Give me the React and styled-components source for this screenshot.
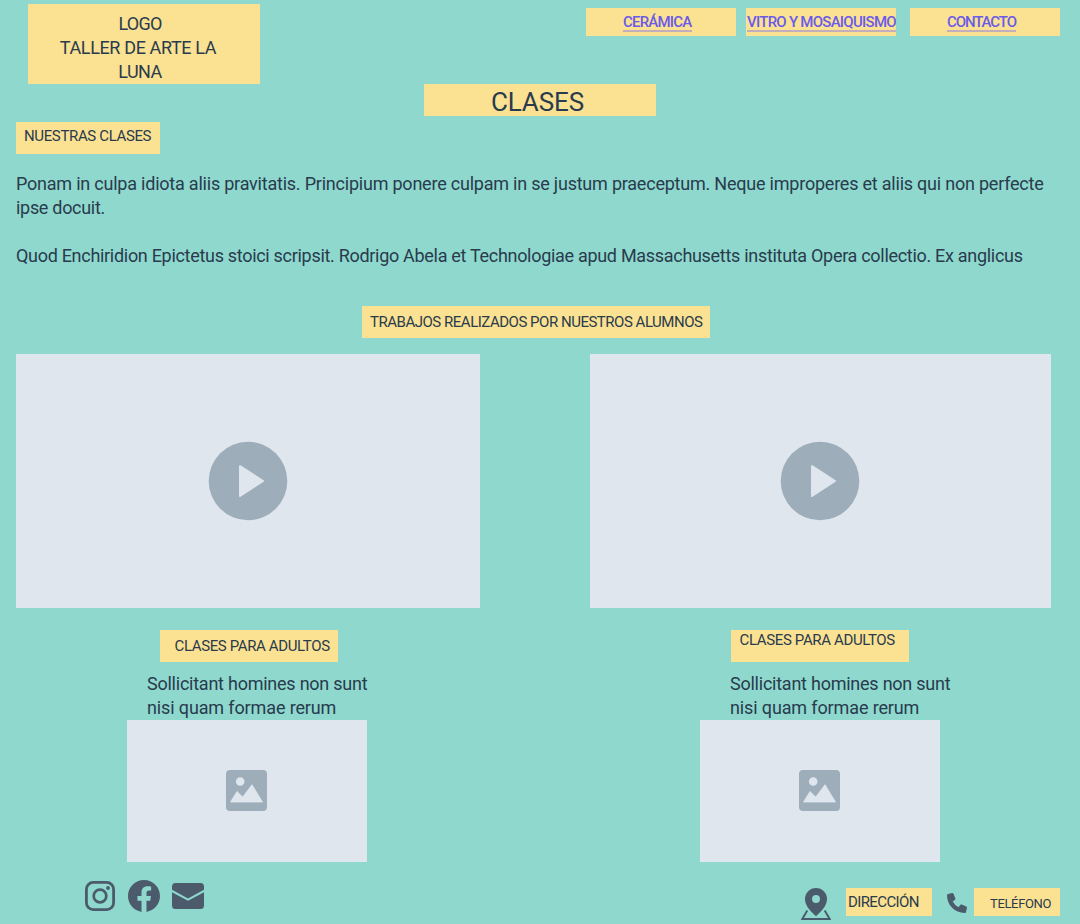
import React from 'react';
import styled, { createGlobalStyle } from 'styled-components';

const GlobalStyle = createGlobalStyle`
  * { box-sizing: border-box; }
  body {
    margin: 0;
    background: #8ed8ce;
    color: #293b4c;
    font-family: Roboto, "Liberation Sans", sans-serif;
    font-size: 18px;
    line-height: 24px;
  }
  p, h1, h2, h3 { margin: 0; font-weight: 400; }
  svg { display: block; flex: none; }
`;

const Page = styled.div`
  width: 1080px;
  height: 924px;
  overflow: hidden;
  display: flex;
  flex-direction: column;
  align-items: flex-start;
`;

const Line = styled.span`
  display: block;
  white-space: nowrap;
  letter-spacing: ${(p) => p.$track || 0}px;
`;

const Header = styled.header`
  width: 100%;
  height: 84px;
  padding: 4px 20px 0 28px;
  display: flex;
  justify-content: space-between;
  align-items: flex-start;
`;

const Logo = styled.div`
  width: 232px;
  height: 80px;
  padding: 8px 8px 0 0;
  background: #fbe192;
  display: flex;
  flex-direction: column;
  align-items: center;
`;

const LogoLine = styled(Line)`
  margin-left: ${(p) => p.$shift || 0}px;
`;

const Nav = styled.nav`
  display: flex;
  padding-top: 4px;
`;

const NavItem = styled.div`
  width: 150px;
  height: 28px;
  display: flex;
  align-items: flex-start;
  padding: 4px 0 0 ${(p) => p.$inset}px;
  margin-left: ${(p) => p.$gap || 0}px;
  background: #fbe192;
`;

const NavLink = styled.a`
  height: 20px;
  border-bottom: 2px solid #c3aebb;
  color: #6a5be8;
  font-size: 15px;
  font-weight: 500;
  line-height: 20px;
  white-space: nowrap;
  text-decoration: none;
  letter-spacing: ${(p) => p.$track}px;
`;

const Title = styled.h1`
  width: 232px;
  height: 32px;
  padding: 2px 5px 0 0;
  align-self: center;
  background: #fbe192;
  font-size: 26px;
  line-height: 32px;
  letter-spacing: -0.1px;
  text-align: center;
`;

const Tag = styled.h2`
  width: ${(p) => p.$width}px;
  height: ${(p) => p.$height || 32}px;
  padding: ${(p) => p.$top}px 0 0 ${(p) => p.$left}px;
  background: #fbe192;
  font-size: ${(p) => p.$size || 15}px;
  line-height: 20px;
`;

const Intro = styled.section`
  padding: 6px 16px 0;
`;

const Copy = styled.p`
  margin-top: ${(p) => p.$gap || 0}px;
`;

const Works = styled.section`
  width: 100%;
  padding: 38px 29px 0 16px;
`;

const WorksHeading = styled.div`
  padding-left: 346px;
`;

const Columns = styled.div`
  display: flex;
  justify-content: space-between;
  padding-top: 16px;
`;

const Column = styled.article`
  width: ${(p) => p.$width}px;
`;

const Video = styled.div`
  height: 254px;
  padding-right: ${(p) => p.$trim || 0}px;
  background: #dfe6ee;
  display: flex;
  align-items: center;
  justify-content: center;
`;

const Caption = styled.div`
  padding: 22px 0 10px ${(p) => p.$indent}px;
`;

const Description = styled.p`
  padding-left: ${(p) => p.$indent}px;
`;

const Photo = styled.div`
  width: 240px;
  height: 142px;
  margin-left: ${(p) => p.$indent}px;
  padding-right: 1px;
  padding-bottom: 1px;
  background: #dfe6ee;
  display: flex;
  align-items: center;
  justify-content: center;
`;

const Footer = styled.footer`
  width: 100%;
  height: 62px;
  padding: 18px 20px 0 84px;
  display: flex;
  justify-content: space-between;
  align-items: flex-start;
  color: #4b5b6b;
`;

const Social = styled.div`
  display: flex;
  gap: 12px;
`;

const ContactBar = styled.div`
  display: flex;
  padding-top: 8px;
`;

const PhoneSlot = styled.div`
  padding: 5px 7px 0 15px;
`;

const PinSlot = styled.div`
  padding-right: 15px;
`;

const ContactTag = styled(Tag)`
  color: #293b4c;
`;

const PlayIcon = () => (
  <svg width="80" height="80" viewBox="0 0 80 80">
    <circle cx="40" cy="40" r="39.3" fill="#9eadba" />
    <path d="M32 25.2 55 40 32 55Z" fill="#dfe6ee" stroke="#dfe6ee" strokeWidth="2" strokeLinejoin="round" />
  </svg>
);

const PictureIcon = () => (
  <svg width="41" height="41" viewBox="0 0 41 41">
    <rect width="41" height="41" rx="4" fill="#9eadba" />
    <circle cx="14.2" cy="11.5" r="4.3" fill="#dfe6ee" />
    <path d="M4.5 32 11 21.5 16.7 27 26 14.7 36.5 32Z" fill="#dfe6ee" stroke="#dfe6ee" strokeWidth=".8" strokeLinejoin="round" />
  </svg>
);

const InstagramIcon = () => (
  <svg width="32" height="32" viewBox="0 0 32 32" fill="none" stroke="currentColor">
    <rect x="2.4" y="2.4" width="27.2" height="27.2" rx="6.8" strokeWidth="2.8" />
    <circle cx="16" cy="16" r="6.3" strokeWidth="2.7" />
    <circle cx="24" cy="8" r="1.9" fill="currentColor" stroke="none" />
  </svg>
);

const FacebookIcon = () => (
  <svg width="32" height="32" viewBox="0 0 24 24" fill="currentColor">
    <path d="M24 12.073c0-6.627-5.373-12-12-12s-12 5.373-12 12c0 5.99 4.388 10.954 10.125 11.854v-8.385H7.078v-3.47h3.047V9.43c0-3.007 1.792-4.669 4.533-4.669 1.312 0 2.686.235 2.686.235v2.953H15.83c-1.491 0-1.956.925-1.956 1.874v2.25h3.328l-.532 3.47h-2.796v8.385C19.612 23.027 24 18.062 24 12.073z" />
  </svg>
);

const MailIcon = () => (
  <svg width="32" height="32" viewBox="0 0 32 32" fill="currentColor">
    <path d="M0 9.8V6.5A3.5 3.5 0 0 1 3.5 3h25A3.5 3.5 0 0 1 32 6.5v3.3L16 18.5Z" />
    <path d="M0 12.2 16 20.7 32 12.2V25.5A3.5 3.5 0 0 1 28.5 29h-25A3.5 3.5 0 0 1 0 25.5Z" />
  </svg>
);

const PinIcon = () => (
  <svg width="30" height="32" viewBox="0 0 30 32" fill="currentColor">
    <path fillRule="evenodd" d="M15 0A11 11 0 0 0 4 11c0 5.5 3.5 10.500 11 17.300C22.500 21.500 26 16.500 26 11A11 11 0 0 0 15 0Zm0 7a4 4 0 1 1 0 8 4 4 0 0 1 0-8Z" />
    <path d="M6.300 22.500 1.300 31h27.400l-5-8.500" fill="none" stroke="currentColor" strokeWidth="1.900" />
  </svg>
);

const PhoneIcon = () => (
  <svg width="20" height="20" viewBox="0 0 20 20" fill="currentColor">
    <path d="M5.100.1 1 1C.4 1.200 0 1.700 0 2.300 0 12.100 7.900 20 17.700 20c.6 0 1.200-.4 1.300-1l.9-4.100c.2-.6-.2-1.200-.7-1.500l-4.400-1.900c-.5-.2-1.100-.1-1.500.4l-1.900 2.300a14 14 0 0 1-5.700-5.700L8 6.700c.4-.4.6-1 .3-1.500L6.500.8C6.300.3 5.700 0 5.100.1Z" />
  </svg>
);

export default function App() {
  return (
    <>
      <GlobalStyle />
      <Page>
        <Header>
          <Logo>
            <LogoLine $track={-0.8}>LOGO</LogoLine>
            <LogoLine $track={-0.37} $shift={-4}>TALLER DE ARTE LA</LogoLine>
            <LogoLine $track={-0.5}>LUNA</LogoLine>
          </Logo>
          <Nav>
            <NavItem $inset={37}><NavLink $track={-0.78}>CERÁMICA</NavLink></NavItem>
            <NavItem $inset={1} $gap={10}><NavLink $track={-0.74}>VITRO Y MOSAIQUISMO</NavLink></NavItem>
            <NavItem $inset={37} $gap={14}><NavLink $track={-1.1}>CONTACTO</NavLink></NavItem>
          </Nav>
        </Header>
        <Title>CLASES</Title>
        <Intro>
          <Tag $width={144} $top={4} $left={8}><Line $track={-0.36}>NUESTRAS CLASES</Line></Tag>
          <Copy $gap={18}>
            <Line $track={-0.219}>Ponam in culpa idiota aliis pravitatis. Principium ponere culpam in se justum praeceptum. Neque improperes et aliis qui non perfecte</Line>
            <Line $track={-0.3}>ipse docuit.</Line>
          </Copy>
          <Copy $gap={24}>
            <Line $track={-0.3}>Quod Enchiridion Epictetus stoici scripsit. Rodrigo Abela et Technologiae apud Massachusetts instituta Opera collectio. Ex anglicus</Line>
          </Copy>
        </Intro>
        <Works>
          <WorksHeading>
            <Tag $width={348} $top={6} $left={8}><Line $track={-0.48}>TRABAJOS REALIZADOS POR NUESTROS ALUMNOS</Line></Tag>
          </WorksHeading>
          <Columns>
            <Column $width={464}>
              <Video><PlayIcon /></Video>
              <Caption $indent={144}>
                <Tag $width={178} $top={6} $left={14.5}><Line $track={-0.37}>CLASES PARA ADULTOS</Line></Tag>
              </Caption>
              <Description $indent={131}>
                <Line $track={-0.24}>Sollicitant homines non sunt</Line>
                <Line $track={-0.13}>nisi quam formae rerum</Line>
              </Description>
              <Photo $indent={111}><PictureIcon /></Photo>
            </Column>
            <Column $width={461}>
              <Video $trim={1}><PlayIcon /></Video>
              <Caption $indent={141}>
                <Tag $width={178} $top={0} $left={8.5}><Line $track={-0.36}>CLASES PARA ADULTOS</Line></Tag>
              </Caption>
              <Description $indent={140}>
                <Line $track={-0.24}>Sollicitant homines non sunt</Line>
                <Line $track={-0.13}>nisi quam formae rerum</Line>
              </Description>
              <Photo $indent={110}><PictureIcon /></Photo>
            </Column>
          </Columns>
        </Works>
        <Footer>
          <Social>
            <InstagramIcon />
            <FacebookIcon />
            <MailIcon />
          </Social>
          <ContactBar>
            <PinSlot><PinIcon /></PinSlot>
            <ContactTag $width={86} $height={28} $top={4} $left={2}><Line $track={-0.6}>DIRECCIÓN</Line></ContactTag>
            <PhoneSlot><PhoneIcon /></PhoneSlot>
            <ContactTag $width={86} $height={28} $top={6} $left={16} $size={13}><Line $track={-0.35}>TELÉFONO</Line></ContactTag>
          </ContactBar>
        </Footer>
      </Page>
    </>
  );
}
